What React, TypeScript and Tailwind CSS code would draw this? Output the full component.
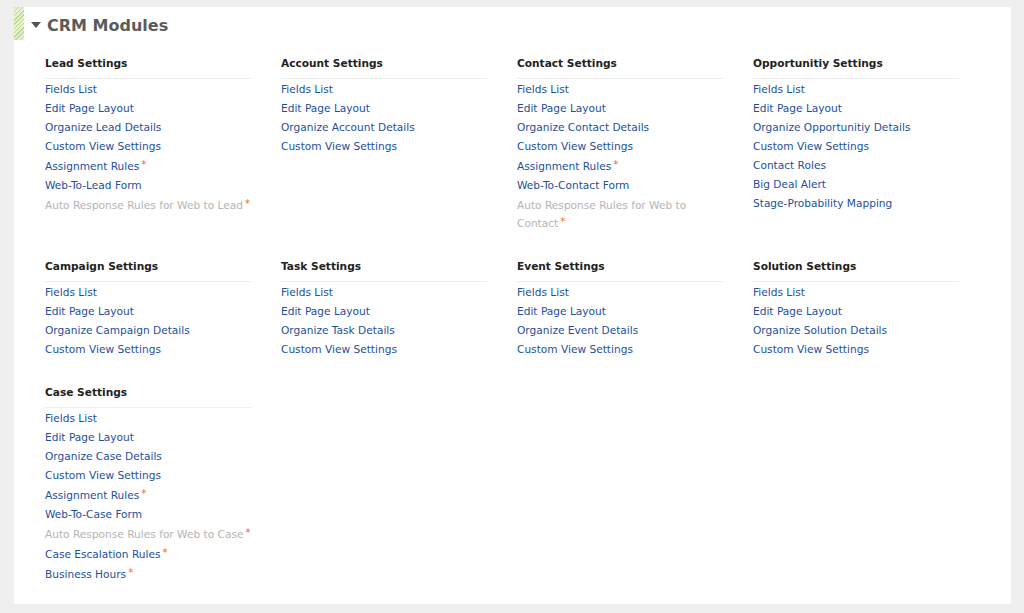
import React from "react";

type Item = { label: string; star?: boolean; disabled?: boolean };
type Section = { title: string; items: Item[] };

const sections: Section[] = [
  {
    title: "Lead Settings",
    items: [
      { label: "Fields List" },
      { label: "Edit Page Layout" },
      { label: "Organize Lead Details" },
      { label: "Custom View Settings" },
      { label: "Assignment Rules", star: true },
      { label: "Web-To-Lead Form" },
      { label: "Auto Response Rules for Web to Lead", star: true, disabled: true },
    ],
  },
  {
    title: "Account Settings",
    items: [
      { label: "Fields List" },
      { label: "Edit Page Layout" },
      { label: "Organize Account Details" },
      { label: "Custom View Settings" },
    ],
  },
  {
    title: "Contact Settings",
    items: [
      { label: "Fields List" },
      { label: "Edit Page Layout" },
      { label: "Organize Contact Details" },
      { label: "Custom View Settings" },
      { label: "Assignment Rules", star: true },
      { label: "Web-To-Contact Form" },
      { label: "Auto Response Rules for Web to Contact", star: true, disabled: true },
    ],
  },
  {
    title: "Opportunitiy Settings",
    items: [
      { label: "Fields List" },
      { label: "Edit Page Layout" },
      { label: "Organize Opportunitiy Details" },
      { label: "Custom View Settings" },
      { label: "Contact Roles" },
      { label: "Big Deal Alert" },
      { label: "Stage-Probability Mapping" },
    ],
  },
  {
    title: "Campaign Settings",
    items: [
      { label: "Fields List" },
      { label: "Edit Page Layout" },
      { label: "Organize Campaign Details" },
      { label: "Custom View Settings" },
    ],
  },
  {
    title: "Task Settings",
    items: [
      { label: "Fields List" },
      { label: "Edit Page Layout" },
      { label: "Organize Task Details" },
      { label: "Custom View Settings" },
    ],
  },
  {
    title: "Event Settings",
    items: [
      { label: "Fields List" },
      { label: "Edit Page Layout" },
      { label: "Organize Event Details" },
      { label: "Custom View Settings" },
    ],
  },
  {
    title: "Solution Settings",
    items: [
      { label: "Fields List" },
      { label: "Edit Page Layout" },
      { label: "Organize Solution Details" },
      { label: "Custom View Settings" },
    ],
  },
  {
    title: "Case Settings",
    items: [
      { label: "Fields List" },
      { label: "Edit Page Layout" },
      { label: "Organize Case Details" },
      { label: "Custom View Settings" },
      { label: "Assignment Rules", star: true },
      { label: "Web-To-Case Form" },
      { label: "Auto Response Rules for Web to Case", star: true, disabled: true },
      { label: "Case Escalation Rules", star: true },
      { label: "Business Hours", star: true },
    ],
  },
];

function SettingsBlock({ section }: { section: Section }) {
  return (
    <div className="w-[206px]">
      <div className="text-[10.6px] font-bold leading-[16px] text-[#222] pb-[7px] border-b border-[#ececec]">
        {section.title}
      </div>
      <ul>
        {section.items.map((item, i) => (
          <li
            key={i}
            className={[
              "text-[10.6px] leading-[18px]",
              item.star ? "pt-[1.5px] pb-[0.5px]" : "py-[0.5px]",
              item.disabled ? "text-[#b4b4b4]" : "text-[#1d4f9b]",
            ].join(" ")}
          >
            <a href="#" className="cursor-pointer">
              {item.label}
            </a>
            {item.star && (
              <sup className="text-[10px] leading-none text-[#f26a21] ml-[2px] relative top-[-2px]">*</sup>
            )}
          </li>
        ))}
      </ul>
    </div>
  );
}

export default function App() {
  return (
    <div
      className="h-[613px] bg-[#efefef] pt-[7px] pl-[14px] pr-[13px]"
      style={{ fontFamily: '"DejaVu Sans", Verdana, sans-serif' }}
    >
      <div className="h-[597px] bg-white">
        <div className="flex items-center h-[33px]">
          <div className="w-[10px] h-[33px] bg-[repeating-linear-gradient(135deg,#bcd98f_0px,#bcd98f_1px,#e6f1d3_1px,#e6f1d3_3px)]" />
          <svg width="10" height="6" viewBox="0 0 10 6" className="ml-[7px] mt-[3px]">
            <polygon points="0,0 10,0 5,6" fill="#555" />
          </svg>
          <h1 className="ml-[6px] mt-[4px] text-[16px] font-bold text-[#5b5b5b] leading-none">CRM Modules</h1>
        </div>
        <div className="grid grid-cols-[236px_236px_236px_236px] gap-y-[26px] pl-[31px] pt-[15px]">
          {sections.map((s) => (
            <SettingsBlock key={s.title} section={s} />
          ))}
        </div>
      </div>
    </div>
  );
}
